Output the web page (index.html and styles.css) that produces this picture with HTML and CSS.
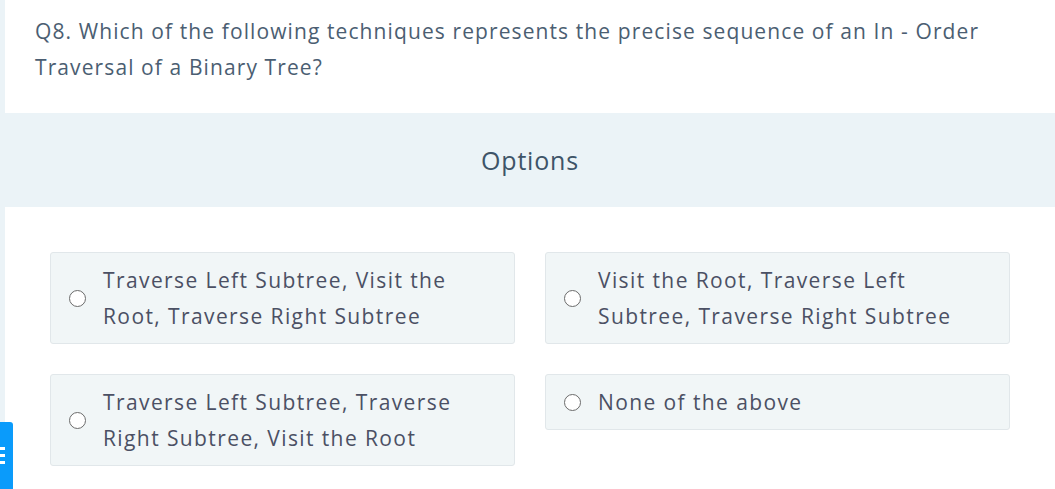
FILE: index.html
```html
<!DOCTYPE html>
<html>
<head>
<meta charset="utf-8">
<link rel="stylesheet" href="styles.css">
</head>
<body>
<div class="wrap">
  <section class="question">
    <p class="q-text">Q8. Which of the following techniques represents the precise sequence of an In - Order Traversal of a Binary Tree?</p>
  </section>
  <div class="options-head">Options</div>
  <section class="options">
    <label class="opt"><span class="radio"></span><span class="opt-text">Traverse Left Subtree, Visit the Root, Traverse Right Subtree</span></label>
    <label class="opt"><span class="radio"></span><span class="opt-text">Visit the Root, Traverse Left Subtree, Traverse Right Subtree</span></label>
    <label class="opt"><span class="radio"></span><span class="opt-text">Traverse Left Subtree, Traverse Right Subtree, Visit the Root</span></label>
    <label class="opt"><span class="radio"></span><span class="opt-text">None of the above</span></label>
  </section>
</div>
<div class="side-tab"><span></span><span></span><span></span></div>
</body>
</html>
```
FILE: styles.css
```css
html, body {
  margin: 0;
  padding: 0;
}
body {
  background: #ebf3f7;
  font-family: "Open Sans", "Lato", sans-serif;
  height: 489px;
  overflow: hidden;
}
.wrap {
  margin-left: 5px;
  background: #ffffff;
  min-height: 489px;
}
.question {
  padding: 13px 30px 28px 30px;
}
.q-text {
  margin: 0;
  font-size: 21px;
  letter-spacing: 1.1px;
  line-height: 36px;
  color: #4b5e72;
  max-width: 960px;
}
.options-head {
  background: #ebf3f7;
  height: 94px;
  display: flex;
  align-items: center;
  justify-content: center;
  font-size: 25px;
  letter-spacing: 0.8px;
  color: #3e5468;
}
.options {
  display: grid;
  grid-template-columns: 1fr 1fr;
  column-gap: 30px;
  row-gap: 30px;
  align-items: start;
  padding: 45px 45px 0 45px;
}
.opt {
  display: flex;
  align-items: center;
  gap: 17px;
  background: #f1f6f7;
  border: 1px solid #e1e7ea;
  border-radius: 3px;
  padding: 9px 50px 9px 18px;
}
.radio {
  flex: none;
  width: 15px;
  height: 15px;
  border: 1.6px solid #6b6b6b;
  border-radius: 50%;
  background: #fff;
}
.opt-text {
  font-size: 21px;
  letter-spacing: 1.4px;
  line-height: 36px;
  color: #4b5064;
}
.side-tab {
  position: fixed;
  left: 0;
  top: 422px;
  width: 13px;
  height: 67px;
  background: #0a9bfb;
  border-top-right-radius: 3px;
  display: flex;
  flex-direction: column;
  justify-content: center;
  gap: 4px;
  box-sizing: border-box;
}
.side-tab span {
  display: block;
  width: 5px;
  height: 3px;
  background: #fff;
}
```
